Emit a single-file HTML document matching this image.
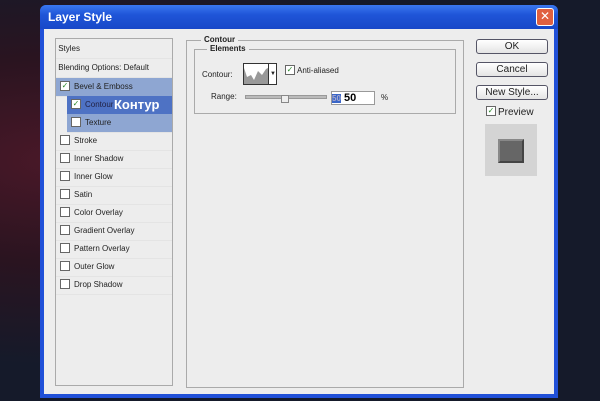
<!DOCTYPE html><html><head><style>
body{margin:0;width:600px;height:401px;overflow:hidden;background:radial-gradient(ellipse at 10% 40%,#4a1828 0%,#2a1420 30%,#151a2a 60%),#14182a;font-family:"Liberation Sans",sans-serif;font-size:8px;color:#222;position:relative}
.win{position:absolute;left:40px;top:5px;width:518px;height:393px;background:#2050d8;border-radius:6px 6px 0 0}
.title{position:absolute;left:0;top:0;width:518px;height:24px;background:linear-gradient(#3a78f0,#1f55d8 40%,#1848c8);border-radius:6px 6px 0 0;color:#fff;font-weight:bold;font-size:12px;line-height:24px;text-indent:8px}
.x{position:absolute;right:4px;top:3px;width:16px;height:16px;background:#e06040;border:1px solid #fff;border-radius:3px;color:#fff;font-size:12px;line-height:15px;text-align:center}
.body{position:absolute;left:4px;top:24px;width:510px;height:365px;background:#ededed}
.lp{position:absolute;left:11px;top:9px;width:116px;height:346px;border:1px solid #aaa;background:#ededed}
.row{position:absolute;left:0;width:116px;height:18px;line-height:18px;border-bottom:1px solid #e4e4e4}
.cb{display:inline-block;width:8px;height:8px;border:1px solid #666;background:#fff;vertical-align:middle;margin:0 4px 0 4px;position:relative;top:-1px;font-size:8px;line-height:8px;color:#2a8a2a;text-align:center}
.sel{background:#8ea6d2}
.grp{position:absolute;left:142px;top:11px;width:276px;height:346px;border:1px solid #aaa}
.btn{position:absolute;left:432px;width:70px;height:13px;border:1px solid #556;border-radius:3px;background:linear-gradient(#fff,#e4e4e4);text-align:center;font-size:10px;line-height:13px}
</style></head><body>
<div class="win"><div class="title">Layer Style</div><div class="x">✕</div>
<div class="body">
<div class="lp">
<div class="row" style="top:0;height:19px;line-height:19px">&nbsp;Styles</div>
<div class="row" style="top:20px">&nbsp;Blending Options: Default</div>
<div class="row sel" style="top:39px"><span class="cb">✓</span>Bevel &amp; Emboss</div>
<div class="row sel" style="top:57px;left:11px;width:105px;background:#4e72c4;color:#fff"><span class="cb">✓</span><span style="color:#224">Contour</span><b style="position:absolute;left:47px;top:0;font-size:13px;color:#fff">Контур</b></div>
<div class="row sel" style="top:75px;left:11px;width:105px"><span class="cb"></span>Texture</div>
<div class="row" style="top:93px"><span class="cb"></span>Stroke</div>
<div class="row" style="top:111px"><span class="cb"></span>Inner Shadow</div>
<div class="row" style="top:129px"><span class="cb"></span>Inner Glow</div>
<div class="row" style="top:147px"><span class="cb"></span>Satin</div>
<div class="row" style="top:165px"><span class="cb"></span>Color Overlay</div>
<div class="row" style="top:183px"><span class="cb"></span>Gradient Overlay</div>
<div class="row" style="top:201px"><span class="cb"></span>Pattern Overlay</div>
<div class="row" style="top:219px"><span class="cb"></span>Outer Glow</div>
<div class="row" style="top:237px"><span class="cb"></span>Drop Shadow</div>
</div>
<div class="grp">
<div style="position:absolute;left:14px;top:-6px;background:#ededed;padding:0 3px;font-weight:bold">Contour</div>
<div style="position:absolute;left:7px;top:8px;width:260px;height:63px;border:1px solid #aaa">
<div style="position:absolute;left:12px;top:-6px;background:#ededed;padding:0 3px;font-weight:bold">Elements</div>
<div style="position:absolute;left:7px;top:20px">Contour:</div>
<div style="position:absolute;left:48px;top:13px;width:32px;height:20px;border:1px solid #333;background:#fff"><svg width="24" height="20" style="position:absolute;left:0;top:0"><path d="M0 4 L3 13 L7 11 L10 16 L14 7 L18 11 L22 5 L24 4 L24 20 L0 20Z" fill="#999"/></svg><div style="position:absolute;left:24px;top:0;width:8px;height:20px;border-left:1px solid #333;font-size:6px;line-height:20px;text-align:center">▼</div></div>
<div style="position:absolute;left:90px;top:16px"><span class="cb" style="margin:0 2px 0 0">✓</span>Anti-aliased</div>
<div style="position:absolute;left:16px;top:42px">Range:</div>
<div style="position:absolute;left:50px;top:45px;width:80px;height:2px;background:#bbb;border:1px solid #999"></div>
<div style="position:absolute;left:86px;top:45px;width:6px;height:6px;background:#eee;border:1px solid #888"></div>
<div style="position:absolute;left:136px;top:41px;width:42px;height:12px;background:#fff;border:1px solid #999;font-size:11px;font-weight:bold;line-height:12px;color:#000"><span style="background:#3a66c8;color:#aac;font-size:8px">50</span>&nbsp;50</div>
<div style="position:absolute;left:186px;top:43px">%</div>
</div>
</div>
<div class="btn" style="top:10px">OK</div>
<div class="btn" style="top:33px">Cancel</div>
<div class="btn" style="top:56px">New Style...</div>
<div style="position:absolute;left:442px;top:78px;font-size:10px"><span class="cb" style="margin:0 2px 0 0">✓</span>Preview</div>
<div style="position:absolute;left:441px;top:95px;width:52px;height:52px;background:#d4d4d4"><div style="position:absolute;left:13px;top:15px;width:22px;height:20px;background:#666;border:2px solid #444;border-top-color:#888;border-left-color:#888"></div></div>
</div></div>
</body></html>
